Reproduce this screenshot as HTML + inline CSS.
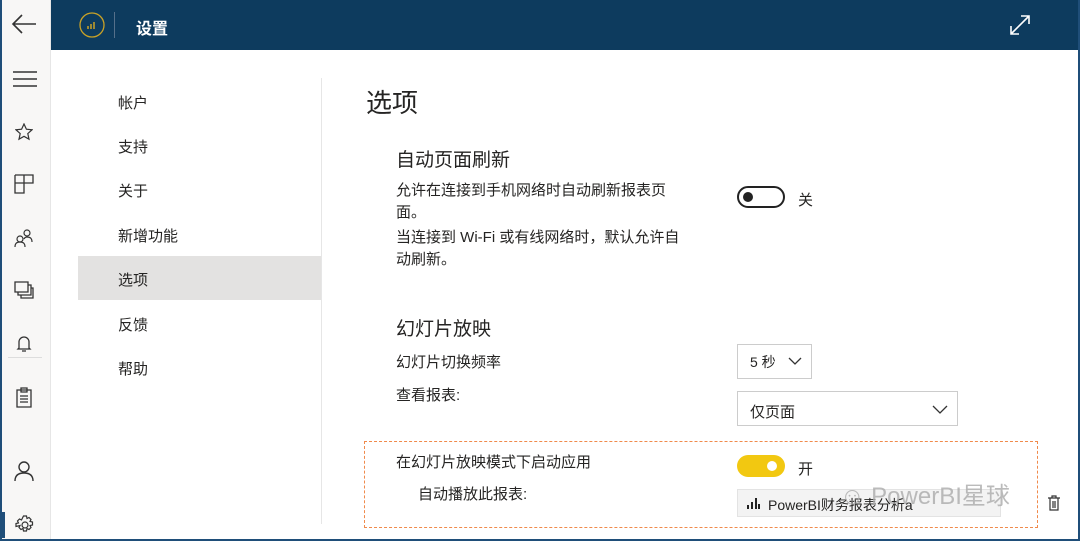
<!DOCTYPE html>
<html><head><meta charset="utf-8"><style>
*{margin:0;padding:0;box-sizing:border-box}
body{width:1080px;height:541px;overflow:hidden;background:#fff;font-family:"Liberation Sans","Noto Sans CJK SC",sans-serif;color:#252423;position:relative}
.frame{position:absolute;inset:0;border:2px solid #1f4e79;border-top:0;pointer-events:none;z-index:9}
.side{position:absolute;left:0;top:0;width:51px;height:541px;background:#f8f7f6;border-right:1px solid #e6e6e6}
.hdr{position:absolute;left:51px;top:0;right:0;height:50px;background:#0d3b5e}
.abs{position:absolute}
.nav{position:absolute;left:118px;font-size:15px}
.t{position:absolute;font-size:15px}
svg{position:absolute}
</style></head><body>
<div class="side"></div>
<div class="hdr"></div>
<div class="frame"></div>
<svg style="left:10px;top:12px" width="28" height="24" viewBox="0 0 28 24"><path d="M26 12H3M12 3L3 12l9 9" fill="none" stroke="#333" stroke-width="1.6"/></svg>
<svg style="left:12px;top:70px" width="26" height="18"><path d="M1 2h24M1 9h24M1 16h24" stroke="#333" stroke-width="1.6"/></svg>
<svg style="left:15px;top:123px" width="18" height="18" viewBox="0 0 18 18"><path d="M9 1l2.4 5.2 5.6.6-4.2 3.8 1.2 5.6L9 13.3 4 16.2l1.2-5.6L1 6.8l5.6-.6z" fill="none" stroke="#333" stroke-width="1.2"/></svg>
<svg style="left:14px;top:174px" width="20" height="20"><path d="M1 1h18v8H10V1M1 1v18h9V9H1" fill="none" stroke="#333" stroke-width="1.3"/></svg>
<svg style="left:14px;top:228px" width="20" height="20"><circle cx="6" cy="11" r="3" fill="none" stroke="#333" stroke-width="1.2"/><path d="M1 19c0-4 2-5 5-5s5 1 5 5" fill="none" stroke="#333" stroke-width="1.2"/><circle cx="13" cy="5" r="3" fill="none" stroke="#333" stroke-width="1.2"/><path d="M10 11c1-2 2-2 3-2 3 0 5 1 5 5" fill="none" stroke="#333" stroke-width="1.2"/></svg>
<svg style="left:14px;top:281px" width="20" height="18"><path d="M1 1h13v10H1zM4 11v3h13V4h-3M7 14v3h12V7h-2" fill="none" stroke="#333" stroke-width="1.3"/></svg>
<svg style="left:16px;top:334px" width="16" height="20"><path d="M3 14V8a5 5 0 0110 0v6l1 1H2zM6 17h4" fill="none" stroke="#333" stroke-width="1.3"/></svg>
<div class="abs" style="left:8px;top:357px;width:34px;height:1px;background:#ddd"></div>
<svg style="left:16px;top:386px" width="16" height="22"><path d="M1 4h14v17H1zM5 2h6v4H5zM4 10h8M4 13h8M4 16h8" fill="none" stroke="#333" stroke-width="1.3"/></svg>
<svg style="left:14px;top:460px" width="20" height="22"><circle cx="10" cy="7" r="5" fill="none" stroke="#333" stroke-width="1.4"/><path d="M1 21c0-6 4-8 9-8s9 2 9 8" fill="none" stroke="#333" stroke-width="1.4"/></svg>
<div class="abs" style="left:2px;top:512px;width:3px;height:26px;background:#1f4e79"></div>
<svg style="left:15px;top:515px" width="20" height="20" viewBox="0 0 20 20"><circle cx="10" cy="10" r="3" fill="none" stroke="#333" stroke-width="1.2"/><path d="M8.5 1h3l.5 2.5 2-1 2 2-1 2 2.5.5v3l-2.5.5 1 2-2 2-2-1-.5 2.5h-3l-.5-2.5-2 1-2-2 1-2L1 11.5v-3l2.5-.5-1-2 2-2 2 1z" fill="none" stroke="#333" stroke-width="1.2"/></svg>
<svg style="left:78px;top:11px" width="28" height="28"><circle cx="14" cy="14" r="12" fill="none" stroke="#c9a227" stroke-width="1.3"/><path d="M10 18v-3M13 18v-5M16 18v-7" stroke="#c9a227" stroke-width="1.5"/></svg>
<div class="abs" style="left:114px;top:12px;width:1px;height:26px;background:#55708a"></div>
<div class="abs" style="left:136px;top:15px;font-size:16px;font-weight:bold;color:#fff">设置</div>
<svg style="left:1009px;top:14px" width="22" height="22"><path d="M2 20L20 2M12 2h8v8M2 12v8h8" fill="none" stroke="#fff" stroke-width="1.6"/></svg>
<div class="abs" style="left:321px;top:78px;width:1px;height:446px;background:#e6e6e6"></div>
<div class="abs" style="left:78px;top:256px;width:243px;height:44px;background:#e3e2e1"></div>
<div class="nav" style="top:92px">帐户</div>
<div class="nav" style="top:136px">支持</div>
<div class="nav" style="top:180px">关于</div>
<div class="nav" style="top:225px">新增功能</div>
<div class="nav" style="top:269px">选项</div>
<div class="nav" style="top:314px">反馈</div>
<div class="nav" style="top:358px">帮助</div>
<div class="t" style="left:366px;top:83px;font-size:26px">选项</div>
<div class="t" style="left:396px;top:145px;font-size:19px">自动页面刷新</div>
<div class="t" style="left:396px;top:180px;width:292px;line-height:22px">允许在连接到手机网络时自动刷新报表页面。</div>
<div class="t" style="left:396px;top:227px;width:292px;line-height:22px">当连接到 Wi-Fi 或有线网络时，默认允许自动刷新。</div>
<div class="abs" style="left:737px;top:186px;width:48px;height:22px;border:2px solid #222;border-radius:11px"></div>
<div class="abs" style="left:743px;top:192px;width:10px;height:10px;border-radius:5px;background:#222"></div>
<div class="t" style="left:798px;top:189px">关</div>
<div class="t" style="left:396px;top:314px;font-size:19px">幻灯片放映</div>
<div class="t" style="left:396px;top:351px">幻灯片切换频率</div>
<div class="t" style="left:396px;top:384px">查看报表:</div>
<div class="abs" style="left:737px;top:344px;width:75px;height:35px;border:1px solid #ccc"></div>
<div class="t" style="left:750px;top:352px;font-size:14px">5 秒</div>
<svg style="left:788px;top:356px" width="14" height="10"><path d="M1 2l6 6 6-6" fill="none" stroke="#333" stroke-width="1.3"/></svg>
<div class="abs" style="left:737px;top:391px;width:221px;height:35px;border:1px solid #ccc"></div>
<div class="t" style="left:750px;top:401px">仅页面</div>
<svg style="left:932px;top:404px" width="16" height="10"><path d="M1 2l7 7 7-7" fill="none" stroke="#333" stroke-width="1.3"/></svg>
<div class="abs" style="left:364px;top:441px;width:674px;height:87px;border:1.5px dashed #f08a4b"></div>
<div class="t" style="left:396px;top:451px">在幻灯片放映模式下启动应用</div>
<div class="t" style="left:418px;top:483px">自动播放此报表:</div>
<div class="abs" style="left:737px;top:455px;width:48px;height:22px;border-radius:11px;background:#f2c811"></div>
<div class="abs" style="left:767px;top:461px;width:10px;height:10px;border-radius:5px;background:#fff"></div>
<div class="t" style="left:798px;top:458px">开</div>
<div class="abs" style="left:737px;top:489px;width:264px;height:28px;background:#f3f3f3;border:1px solid #e3e3e3"></div>
<svg style="left:746px;top:497px" width="14" height="12"><path d="M2 12V8M6 12V5M10 12V1M13 12V7" stroke="#222" stroke-width="2"/></svg>
<div class="t" style="left:768px;top:495px;font-size:14px">PowerBI财务报表分析a</div>
<div class="t" style="left:840px;top:476px;font-size:24px;color:rgba(170,170,170,.8)">☺ PowerBI星球</div>
<svg style="left:1047px;top:495px" width="14" height="16"><path d="M1 3h12M5 3V1h4v2M3 3v12h8V3M6 6v7M8 6v7" fill="none" stroke="#333" stroke-width="1.2"/></svg>
</body></html>
